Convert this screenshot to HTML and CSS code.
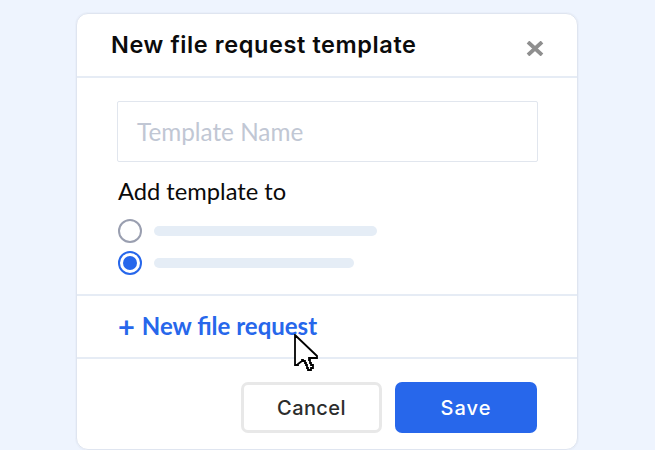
FILE: index.html
```html
<!DOCTYPE html>
<html lang="en">
<head>
<meta charset="utf-8">
<title>New file request template</title>
<link rel="stylesheet" href="styles.css">
</head>
<body>
<div class="card">
  <header class="head">
    <h1 class="title">New file request template</h1>
    <svg class="close" width="18" height="15" viewBox="0 0 18 15" aria-label="Close"><path d="M2 1 L16 14 M16 1 L2 14" stroke="#8f8f8f" stroke-width="3.8" fill="none"/></svg>
  </header>
  <section class="form">
    <div class="input">Template Name</div>
    <div class="label">Add template to</div>
    <div class="opts">
      <div class="opt"><span class="radio"></span><span class="bar bar-a"></span></div>
      <div class="opt"><span class="radio on"><span class="dot"></span></span><span class="bar bar-b"></span></div>
    </div>
  </section>
  <section class="add"><span class="plus">+</span><span>New file request</span></section>
  <footer class="foot">
    <button class="btn cancel">Cancel</button>
    <button class="btn save">Save</button>
  </footer>
  <svg class="cursor" width="26" height="38" viewBox="0 0 26 38"><path d="M2 1 L24 22 V24 H16 V26 H17 V29 H18 V31 H20 V34 H18 V36 H15 V34 H14 V31 H13 V29 H12 V27 H10 V26 H9 V27 L5 30 V31 H2 Z" fill="#fff" stroke="#000" stroke-width="1.8"/></svg>
</div>
</body>
</html>
```
FILE: styles.css
```css
* { box-sizing: border-box; }
html, body { margin: 0; height: 100%; }
body { background: #eef4fe; width: 655px; height: 450px; overflow: hidden; font-family: "Lato", sans-serif; }
.card { position: relative; margin: 13px 0 0 76px; width: 502px; height: 437px; background: #fff; border: 1px solid #dfe5f0; border-radius: 12px; box-shadow: 0 0 0 1px rgba(228, 234, 245, 0.5); display: flex; flex-direction: column; }
.head { height: 64px; flex: none; display: flex; align-items: center; justify-content: space-between; padding: 0 33px 0 34px; border-bottom: 2px solid #e6ecf5; }
.title { margin: 0; font: 600 23.5px/1 "Inter", sans-serif; color: #0b0b0b; letter-spacing: 0.6px; }
.close { margin-top: 7px; }
.form { height: 218px; flex: none; padding: 23px 39px 0 40px; border-bottom: 2px solid #e6ecf5; }
.input { height: 61px; border: 1.5px solid #e1e6ee; border-radius: 2px; padding-left: 19px; display: flex; align-items: center; font-size: 24.3px; color: #c1c7d4; }
.label { margin-top: 14px; font-size: 23.7px; line-height: 30px; color: #0a0a0a; padding-left: 1px; }
.opts { margin-top: 13px; padding-left: 1px; display: flex; flex-direction: column; gap: 8px; }
.opt { display: flex; align-items: center; gap: 12px; height: 24px; }
.radio { width: 24px; height: 24px; border-radius: 50%; border: 2px solid #9a9fb0; display: flex; align-items: center; justify-content: center; }
.radio.on { border-color: #2767eb; }
.dot { width: 14px; height: 14px; border-radius: 50%; background: #2767eb; }
.bar { height: 10px; border-radius: 5px; background: #e5edf6; }
.bar-a { width: 223px; }
.bar-b { width: 200px; }
.add { height: 63px; flex: none; padding: 0 0 2px 41px; display: flex; align-items: center; gap: 7px; font-size: 24px; font-weight: 700; color: #2767eb; border-bottom: 2px solid #e6ecf5; }
.plus { font-size: 29px; line-height: 1; }
.foot { flex: 1; display: flex; justify-content: flex-end; gap: 13px; padding: 23px 40px 0 0; align-items: flex-start; }
.btn { height: 51px; border-radius: 7px; font: 500 20px/1 "Inter", sans-serif; letter-spacing: 0.4px; }
.cancel { width: 141px; background: #fff; border: 3px solid #e8e8e8; color: #2c2c2c; }
.save { width: 142px; background: #2767eb; border: 0; color: #fff; letter-spacing: 1px; }
.cursor { position: absolute; left: 216px; top: 320px; }
```
